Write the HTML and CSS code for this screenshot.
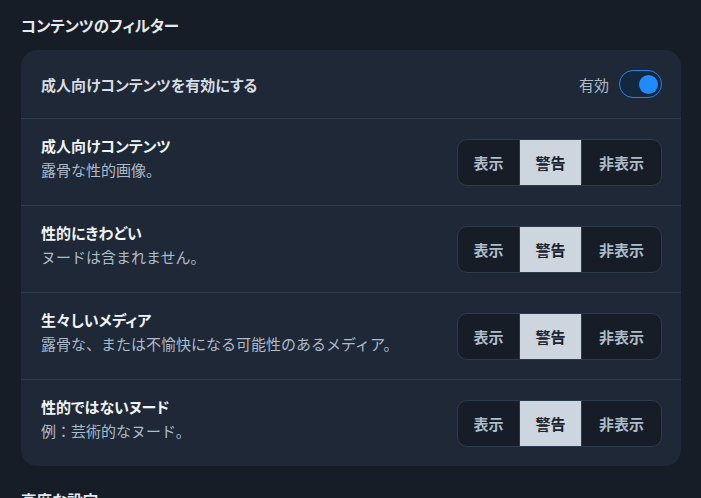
FILE: index.html
```html
<!DOCTYPE html>
<html lang="ja">
<head>
<meta charset="utf-8">
<link rel="stylesheet" href="styles.css">
</head>
<body>
<div class="page">
  <h2 class="section-title">コンテンツのフィルター</h2>
  <div class="card">
    <div class="row row-toggle">
      <span class="toggle-label">成人向けコンテンツを有効にする</span>
      <div class="toggle-wrap">
        <span class="toggle-text">有効</span>
        <span class="toggle"><span class="knob"></span></span>
      </div>
    </div>
    <div class="row">
      <div class="info">
        <div class="name">成人向けコンテンツ</div>
        <div class="desc">露骨な性的画像。</div>
      </div>
      <div class="seg"><span class="opt">表示</span><span class="opt active">警告</span><span class="opt wide">非表示</span></div>
    </div>
    <div class="row">
      <div class="info">
        <div class="name">性的にきわどい</div>
        <div class="desc">ヌードは含まれません。</div>
      </div>
      <div class="seg"><span class="opt">表示</span><span class="opt active">警告</span><span class="opt wide">非表示</span></div>
    </div>
    <div class="row">
      <div class="info">
        <div class="name">生々しいメディア</div>
        <div class="desc">露骨な、または不愉快になる可能性のあるメディア。</div>
      </div>
      <div class="seg"><span class="opt">表示</span><span class="opt active">警告</span><span class="opt wide">非表示</span></div>
    </div>
    <div class="row">
      <div class="info">
        <div class="name">性的ではないヌード</div>
        <div class="desc">例：芸術的なヌード。</div>
      </div>
      <div class="seg"><span class="opt">表示</span><span class="opt active">警告</span><span class="opt wide">非表示</span></div>
    </div>
  </div>
  <h2 class="section-title next">高度な設定</h2>
</div>
</body>
</html>
```
FILE: styles.css
```css
* { box-sizing: border-box; }
html, body {
  margin: 0;
  padding: 0;
  background: #161d26;
  height: 100%;
  overflow: hidden;
}
body {
  font-family: "Noto Sans CJK JP", "Noto Sans", sans-serif;
  color: #f1f3f5;
}
.page {
  padding: 13px 20px 0 21px;
}
.section-title {
  margin: 0;
  font-size: 15.5px;
  font-weight: 600;
  line-height: 24px;
  color: #e6eaee;
  font-feature-settings: "palt";
}
.section-title.next {
  margin-top: 22px;
}
.card {
  margin-top: 13px;
  width: 660px;
  background: #1e2836;
  border-radius: 16px;
}
.row {
  display: flex;
  align-items: center;
  justify-content: space-between;
  height: 87px;
  padding: 0 19px 0 20px;
  border-top: 1px solid #2e3b4c;
}
.row-toggle {
  height: 68px;
  border-top: none;
}
.toggle-label {
  font-size: 15px;
  font-weight: 600;
  color: #d6dde4;
  font-feature-settings: "palt";
}
.toggle-wrap {
  display: flex;
  align-items: center;
  gap: 10px;
}
.toggle-text {
  font-size: 15px;
  color: #aebbc9;
}
.toggle {
  display: flex;
  align-items: center;
  justify-content: flex-end;
  width: 43px;
  height: 28px;
  border: 1.5px solid #2586ec;
  border-radius: 14px;
  background: #13273e;
  padding: 0 3px;
}
.knob {
  width: 19px;
  height: 19px;
  border-radius: 50%;
  background: #208bfe;
}
.info {
  display: flex;
  flex-direction: column;
  gap: 4px;
  padding-bottom: 8px;
}
.name {
  font-size: 15px;
  font-weight: 700;
  line-height: 20px;
  color: #f1f3f5;
  font-feature-settings: "palt";
}
.desc {
  font-size: 15px;
  line-height: 20px;
  color: #aebbc9;
}
.seg {
  display: flex;
  height: 47px;
  border: 1px solid #2e3b4c;
  border-radius: 10px;
  overflow: hidden;
  background: #161d26;
}
.opt {
  display: flex;
  align-items: center;
  justify-content: center;
  width: 62px;
  font-size: 15px;
  font-weight: 700;
  color: #aebbc9;
  border-right: 1px solid #2e3b4c;
}
.opt.wide {
  width: 79px;
  border-right: none;
}
.opt.active {
  background: #cdd5de;
  color: #1b2330;
}
```
